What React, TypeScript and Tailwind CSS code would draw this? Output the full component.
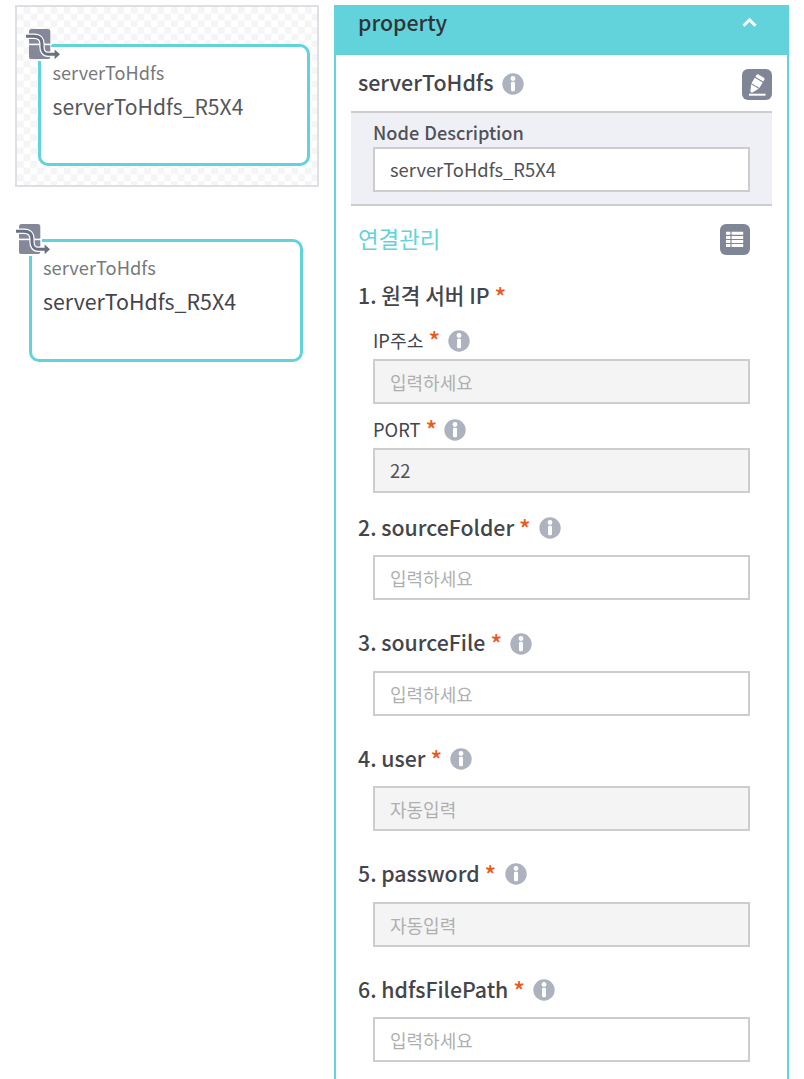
import React from "react";

const NodeIcon = ({ className }: { className: string }) => (
  <svg className={className} width="36" height="34" viewBox="-1 -1 36 34" fill="none">
    <rect x="3" y="0" width="21.3" height="30" rx="2.6" fill="#848899" />
    <path d="M2 15.4H26" stroke="#fff" strokeWidth="1.6" />
    <path d="M-1 7.3H8C14 7.3 16 11 16 15V18C16 22 18 25.3 22 25.3H29" stroke="#fff" strokeWidth="5.4" />
    <path d="M27.8 19L35 25.3L27.8 31.5Z" fill="#fff" />
    <path d="M0 7.3H8C14 7.3 16 11 16 15V18C16 22 18 25.3 22 25.3H29" stroke="#687081" strokeWidth="3" />
    <path d="M28.6 20.4L34 25.3L28.6 30.3Z" fill="#687081" />
  </svg>
);

const Info = ({ className = "" }: { className?: string }) => (
  <svg className={`shrink-0 ${className}`} width="22" height="22" viewBox="0 0 22 22">
    <circle cx="11" cy="11" r="10.7" fill="#adb2bf" />
    <circle cx="11" cy="5.5" r="2.4" fill="#fff" />
    <rect x="9" y="8.8" width="4" height="9.4" rx="1.3" fill="#fff" />
  </svg>
);

const NodeCard = ({ muted = false }: { muted?: boolean }) => (
  <div
    className={`relative rounded-[10px] border-[3px] border-[#62d3db] bg-white pt-[11px] ${
      muted ? "h-[122px] w-[272px] pl-[11.6px]" : "h-[123px] w-[274px] pl-[11px]"
    }`}
  >
    <div className={`h-[29px] leading-[29px] text-[#77787c] ${muted ? "text-[18.1px]" : "text-[18.3px]"}`}>
      serverToHdfs
    </div>
    <div
      className={`mt-[4px] leading-[30px] ${muted ? "text-[21.1px] text-[#55565b]" : "text-[21.35px] text-[#44454c]"}`}
    >
      serverToHdfs_R5X4
    </div>
    <div className="absolute -left-[3px] -top-[3px] h-[17px] w-[13px] bg-white" />
    <NodeIcon className={`absolute -top-[19px] ${muted ? "-left-[16px]" : "-left-[17px]"}`} />
  </div>
);

const Star = () => (
  <span className="ml-[5px] w-[11px] shrink-0 pt-px text-[24px] font-medium leading-[32px] text-[#ea5a1e]">*</span>
);

const Heading = ({ text, className }: { text: string; className: string }) => (
  <div
    className={`flex pl-[22px] text-[21.3px] font-medium leading-[32px] text-[#44454c] [word-spacing:-1.2px] ${className}`}
  >
    <span>{text}</span>
    <Star />
  </div>
);

const Field = ({ value, disabled = false, filled = false }: { value: string; disabled?: boolean; filled?: boolean }) => (
  <div
    className={`ml-[37px] flex h-[45px] w-[377px] shrink-0 items-center border-2 border-[#cdcdcd] pl-[15px] pt-px ${
      disabled ? "bg-[#f4f4f4]" : "bg-white"
    } ${filled ? "text-[18.35px] text-[#505155]" : "text-[18px] text-[#afafaf]"}`}
  >
    {value}
  </div>
);

const Label = ({ text, className }: { text: string; className: string }) => (
  <div className={`flex pl-[37px] text-[18.3px] leading-[28px] text-[#44454c] ${className}`}>
    <span>{text}</span>
    <div className="-mt-[3px] flex">
      <Star />
    </div>
    <Info className="ml-[8px] mt-[4px]" />
  </div>
);

const steps = [
  { text: "2. sourceFolder", value: "입력하세요", disabled: false, row: "h-[62px] pt-[18px]", info: "mt-[6px]" },
  { text: "3. sourceFile", value: "입력하세요", disabled: false, row: "h-[71px] pt-[26px]", info: "mt-[7px]" },
  { text: "4. user", value: "자동입력", disabled: true, row: "h-[70px] pt-[26px]", info: "mt-[6px]" },
  { text: "5. password", value: "자동입력", disabled: true, row: "h-[71px] pt-[26px]", info: "mt-[6px]" },
  { text: "6. hdfsFilePath", value: "입력하세요", disabled: false, row: "h-[70px] pt-[26px]", info: "mt-[6px]" },
];

export default function App() {
  return (
    <div
      lang="ko"
      className="flex h-[1079px] w-[804px] overflow-hidden bg-white pt-[5px] font-['Noto_Sans_CJK_KR',sans-serif]"
    >
      <div className="w-[334px] shrink-0">
        <div className="ml-[15px] h-[182px] w-[304px] border-2 border-[#dedfe5] bg-[repeating-conic-gradient(#f5f5f6_0_25%,#ffffff_0_50%)] bg-[length:13.4px_13.4px] pl-[21px] pt-[37px]">
          <NodeCard muted />
        </div>
        <div className="ml-[29px] mt-[52px]">
          <NodeCard />
        </div>
      </div>

      <div className="flex h-[1100px] w-[455px] shrink-0 flex-col border-x-2 border-[#62d3db]">
        <div className="flex h-[50px] shrink-0 justify-between bg-[#62d3db] pl-[22px] pr-[30px]">
          <span className="text-[21.3px] font-medium leading-[33px] text-[#303438]">property</span>
          <svg className="mt-[12px]" width="15" height="11" viewBox="0 0 15 11" fill="none">
            <path d="M1.5 8.8L7.5 2.8L13.5 8.8" stroke="#fff" strokeWidth="3" />
          </svg>
        </div>

        <div className="flex h-[56px] shrink-0 items-center pl-[22px] pr-[15px]">
          <span className="-mt-px text-[21.4px] font-medium text-[#44454c]">serverToHdfs</span>
          <Info className="ml-[9px] mt-[2px]" />
          <svg className="ml-auto mt-[2px]" width="30" height="31" viewBox="0 0 30 31">
            <rect width="30" height="31" rx="6" fill="#818697" />
            <g fill="#fff" transform="translate(9 23.2) rotate(31)">
              <path d="M-.8 0L-4 -7H4.8L1 0Z" />
              <rect x="-4.2" y="-14.3" width="9.2" height="6.4" />
              <path d="M-4.2 -15.5V-17.3Q-4.2 -19 -2.7 -19H3.5Q5 -19 5 -17.3V-15.5Z" />
            </g>
            <rect x="7" y="24.7" width="16.5" height="2" fill="#fff" />
          </svg>
        </div>

        <div className="mx-[15px] h-[95px] shrink-0 border-y-2 border-[#cdcdcd] bg-[#eff0f5]">
          <div className="h-[34px] pl-[22px] text-[18.15px] font-medium leading-[38px] text-[#505157]">
            Node Description
          </div>
          <div className="-ml-[15px]">
            <Field value="serverToHdfs_R5X4" filled />
          </div>
        </div>

        <div className="flex h-[67px] shrink-0 items-center justify-between pl-[22px] pr-[37px]">
          <span className="-mt-[2px] text-[22.4px] text-[#62d3db]">연결관리</span>
          <svg width="30" height="31" viewBox="0 0 30 31">
            <rect width="30" height="31" rx="6" fill="#818697" />
            <g fill="#fff">
              <path d="M6 7.8h4.4v3H6zM11.6 7.8h11.6v3h-11.6zM6 11.9h4.4v3H6zM11.6 11.9h11.6v3h-11.6zM6 16h4.4v3H6zM11.6 16h11.6v3h-11.6zM6 20.1h4.4v3H6zM11.6 20.1h11.6v3h-11.6z" />
            </g>
          </svg>
        </div>

        <Heading text="1. 원격 서버 IP" className="h-[45px] pt-[6px]" />
        <Label text="IP주소" className="h-[41px] pt-[8px]" />
        <Field value="입력하세요" disabled />
        <Label text="PORT" className="h-[44px] pt-[11px]" />
        <Field value="22" disabled filled />

        {steps.map((s) => (
          <div key={s.text} className="shrink-0">
            <div className={`flex items-start ${s.row}`}>
              <Heading text={s.text} className="h-[32px]" />
              <Info className={`ml-[9px] ${s.info}`} />
            </div>
            <Field value={s.value} disabled={s.disabled} />
          </div>
        ))}
      </div>
    </div>
  );
}
